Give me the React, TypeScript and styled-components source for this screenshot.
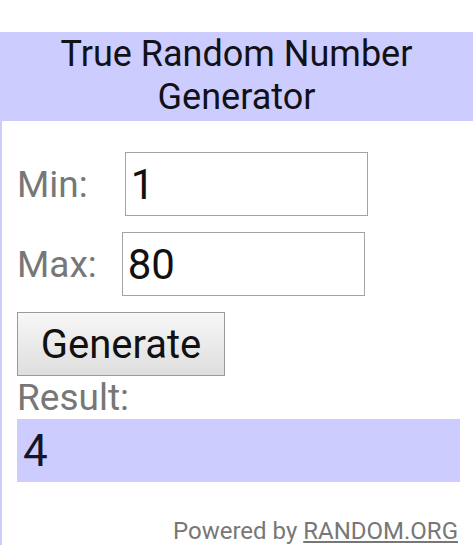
import React from "react";
import styled, { createGlobalStyle } from "styled-components";

const GlobalStyle = createGlobalStyle`
  html, body {
    margin: 0;
    padding: 0;
    background: #ffffff;
    font-family: Roboto, "Noto Sans", Arial, sans-serif;
  }
`;

const Page = styled.div`
  padding-top: 32px;
`;

const Widget = styled.div`
  border-left: 2px solid #ccccff;
`;

const Header = styled.div`
  background: #ccccff;
  color: #111118;
  text-align: center;
  font-size: 36px;
  line-height: 43px;
  padding: 1px 8px 2px;
  margin-left: -2px;
`;

const Body = styled.div`
  padding: 31px 13px 0 15px;
  display: flex;
  flex-direction: column;
`;

const Row = styled.div<{ $gap: number }>`
  display: flex;
  align-items: center;
  gap: ${(p) => p.$gap}px;
  margin-bottom: 16px;
`;

const Label = styled.span`
  font-size: 37px;
  color: #777777;
`;

const Input = styled.input`
  box-sizing: border-box;
  width: 243px;
  height: 64px;
  border: 1px solid #a3a3a3;
  padding: 0 5px;
  font-family: inherit;
  font-size: 42px;
  color: #111111;
  background: #ffffff;
  outline: none;
`;

const Button = styled.button`
  box-sizing: border-box;
  align-self: flex-start;
  width: 208px;
  height: 64px;
  border: 1px solid #9a9a9a;
  border-radius: 0;
  background: linear-gradient(#f7f7f7, #dedede);
  font-family: inherit;
  font-size: 40px;
  color: #111111;
  padding: 0;
`;

const ResultLabel = styled.div`
  font-size: 37px;
  line-height: 43px;
  color: #777777;
`;

const ResultBox = styled.div`
  box-sizing: border-box;
  height: 63px;
  background: #ccccff;
  display: flex;
  align-items: center;
  padding-left: 6px;
  font-size: 44px;
  color: #14142a;
`;

const Footer = styled.div`
  text-align: right;
  font-size: 24px;
  color: #777777;
  margin-top: 35px;
  padding-right: 2px;
`;

const Link = styled.a`
  color: #777777;
  text-decoration: underline;
`;

export default function App() {
  return (
    <>
      <GlobalStyle />
      <Page>
        <Widget>
          <Header>
            True Random Number
            <br />
            Generator
          </Header>
          <Body>
            <Row $gap={37}>
              <Label>Min:</Label>
              <Input defaultValue="1" />
            </Row>
            <Row $gap={25}>
              <Label>Max:</Label>
              <Input defaultValue="80" />
            </Row>
            <Button>Generate</Button>
            <ResultLabel>Result:</ResultLabel>
            <ResultBox>4</ResultBox>
            <Footer>
              Powered by <Link href="#">RANDOM.ORG</Link>
            </Footer>
          </Body>
        </Widget>
      </Page>
    </>
  );
}
